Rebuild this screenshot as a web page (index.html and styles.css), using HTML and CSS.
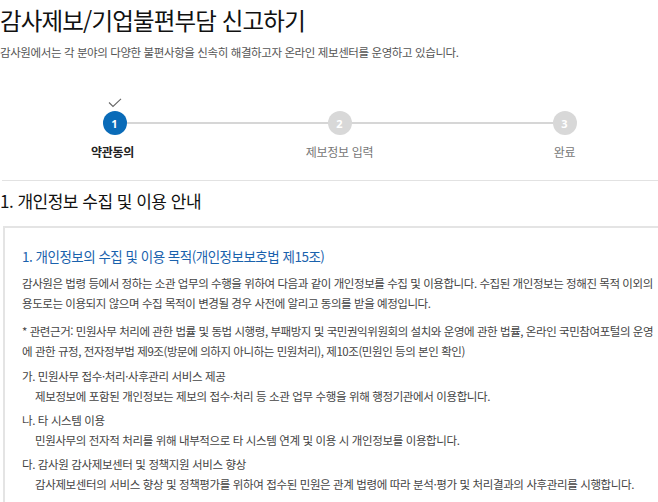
FILE: index.html
```html
<!DOCTYPE html>
<html lang="ko">
<head>
<meta charset="utf-8">
<link rel="stylesheet" href="styles.css">
</head>
<body>
<div class="page">
  <h1 class="title">감사제보/기업불편부담 신고하기</h1>
  <p class="sub">감사원에서는 각 분야의 다양한 불편사항을 신속히 해결하고자 온라인 제보센터를 운영하고 있습니다.</p>

  <div class="steps">
    <div class="step done">
      <span class="check"><svg width="14" height="10" viewBox="0 0 14 10"><path d="M1 4.5 L5 8.5 L13 0.8" fill="none" stroke="#666" stroke-width="1.1"/></svg></span>
      <span class="num">1</span>
      <span class="label">약관동의</span>
    </div>
    <div class="step">
      <span class="check"></span>
      <span class="num">2</span>
      <span class="label">제보정보 입력</span>
    </div>
    <div class="step">
      <span class="check"></span>
      <span class="num">3</span>
      <span class="label">완료</span>
    </div>
  </div>

  <h2 class="section">1. 개인정보 수집 및 이용 안내</h2>

  <div class="box">
    <h3 class="box-title">1. 개인정보의 수집 및 이용 목적(개인정보보호법 제15조)</h3>
    <p class="para">감사원은 법령 등에서 정하는 소관 업무의 수행을 위하여 다음과 같이 개인정보를 수집 및 이용합니다. 수집된 개인정보는 정해진 목적 이외의 용도로는 이용되지 않으며 수집 목적이 변경될 경우 사전에 알리고 동의를 받을 예정입니다.</p>
    <p class="para">* 관련근거: 민원사무 처리에 관한 법률 및 동법 시행령, 부패방지 및 국민권익위원회의 설치와 운영에 관한 법률, 온라인 국민참여포털의 운영에 관한 규정, 전자정부법 제9조(방문에 의하지 아니하는 민원처리), 제10조(민원인 등의 본인 확인)</p>
    <dl class="items">
      <dt>가. 민원사무 접수·처리·사후관리 서비스 제공</dt>
      <dd>제보정보에 포함된 개인정보는 제보의 접수·처리 등 소관 업무 수행을 위해 행정기관에서 이용합니다.</dd>
      <dt>나. 타 시스템 이용</dt>
      <dd>민원사무의 전자적 처리를 위해 내부적으로 타 시스템 연계 및 이용 시 개인정보를 이용합니다.</dd>
      <dt>다. 감사원 감사제보센터 및 정책지원 서비스 향상</dt>
      <dd>감사제보센터의 서비스 향상 및 정책평가를 위하여 접수된 민원은 관계 법령에 따라 분석·평가 및 처리결과의 사후관리를 시행합니다.</dd>
    </dl>
  </div>
</div>
</body>
</html>
```

FILE: styles.css
```css
html, body {
  margin: 0;
  padding: 0;
  overflow: hidden;
  background: #fff;
}
body {
  font-family: "Malgun Gothic", "Noto Sans CJK KR", "Noto Sans", sans-serif;
  color: #333;
}
.page {
  width: 677px;
}
.title {
  margin: 0;
  padding-top: 4px;
  font-size: 23.5px;
  letter-spacing: -0.85px;
  font-weight: 400;
  line-height: 32px;
  color: #111;
}
.sub {
  margin: 7px 0 0;
  font-size: 11.5px;
  letter-spacing: -0.4px;
  line-height: 18px;
  color: #555;
}
.steps {
  position: relative;
  display: grid;
  grid-template-columns: repeat(3, 1fr);
  margin-left: 2px;
  margin-top: 35px;
  padding-bottom: 19px;
  border-bottom: 1px solid #e2e2e2;
}
.steps::before {
  content: "";
  position: absolute;
  left: 16.67%;
  right: 16.67%;
  top: 26px;
  height: 2px;
  background: #d6d6d6;
}
.step {
  display: flex;
  flex-direction: column;
  align-items: center;
  position: relative;
}
.check {
  height: 15px;
  padding-top: 2px;
  box-sizing: border-box;
  display: flex;
  align-items: flex-start;
  justify-content: center;
}
.num {
  width: 24px;
  height: 24px;
  border-radius: 50%;
  background: #d8d8d8;
  color: #fff;
  font-size: 11px;
  font-weight: 700;
  display: flex;
  align-items: center;
  justify-content: center;
  position: relative;
  font-family: "Noto Sans", sans-serif;
}
.step.done .num {
  background: #0a6bb8;
}
.label {
  margin-top: 8px;
  font-size: 12px;
  letter-spacing: -0.3px;
  line-height: 18px;
  color: #777;
}
.step.done .label {
  color: #222;
  font-weight: 700;
  margin-right: 4px;
}
.section {
  margin: 7px 0 0;
  font-size: 17px;
  letter-spacing: -0.5px;
  font-weight: 400;
  line-height: 26px;
  color: #111;
}
.box {
  margin: 12px 0 0 3px;
  border-top: 2px solid #e4e4e4;
  border-left: 2px solid #e4e4e4;
  padding: 17px 23px 10px 17px;
}
.box-title {
  margin: 0 0 6px;
  font-size: 13.5px;
  letter-spacing: -0.5px;
  font-weight: 400;
  line-height: 22px;
  color: #1a62ad;
}
.para {
  margin: 0;
  font-size: 11.5px;
  letter-spacing: -0.44px;
  line-height: 20px;
  color: #444;
}
.para + .para {
  margin-top: 8px;
}
.items {
  margin: 5px 0 0;
  font-size: 11.5px;
  letter-spacing: -0.38px;
  line-height: 20px;
  color: #444;
}
.items dt {
  margin: 0;
}
.items dd {
  margin: 0 0 4px 13px;
}
```
